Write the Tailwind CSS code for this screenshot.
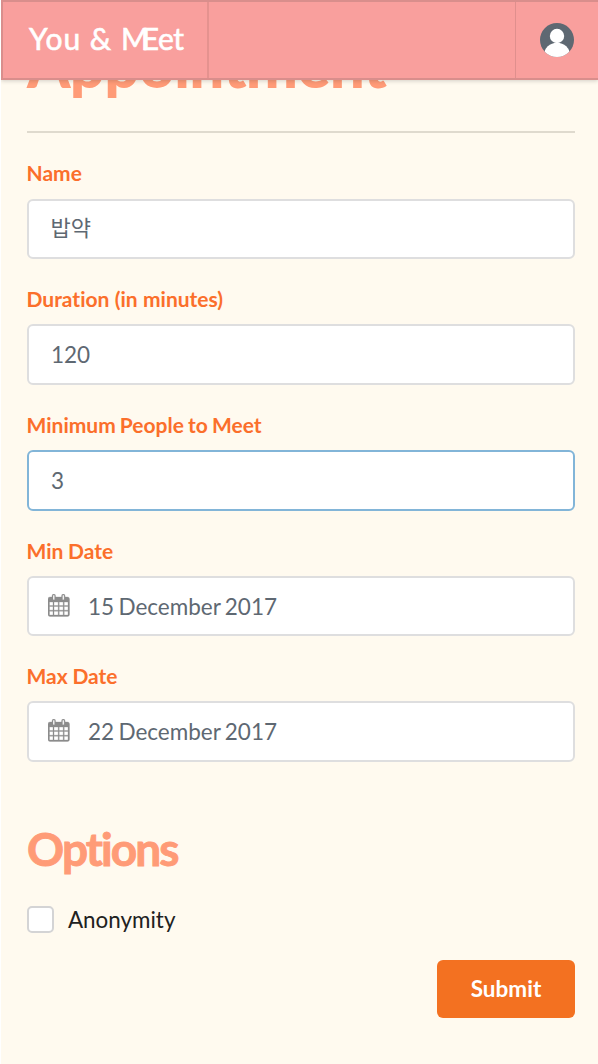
<!DOCTYPE html>
<html lang="en">
<head>
<meta charset="utf-8">
<title>You &amp; MEet</title>
<script src="https://cdn.jsdelivr.net/npm/@tailwindcss/browser@4"></script>
</head>
<body class="bg-white pl-px h-[1064px] overflow-hidden font-['Lato','Noto_Sans_CJK_KR',sans-serif] [font-variant-ligatures:none]">
<div class="bg-[#fffaef] h-[1064px] overflow-hidden">
  <header class="relative z-10 h-20 flex bg-[#f99f9d] border-2 border-r-0 border-[#d98e8c] shadow-[0_1px_4px_rgba(34,36,38,0.2)]">
    <div class="w-[206px] shrink-0 border-r-2 border-[#e5928f] pl-[26px] pt-[14px] text-white text-[30px] leading-[44px] whitespace-nowrap [-webkit-text-stroke:0.6px_white]"><span class="tracking-[1px]">You &amp; </span><span class="tracking-[-7px]">M</span><span class="tracking-[-0.4px]">Eet</span></div>
    <div class="grow"></div>
    <div class="w-[83px] shrink-0 border-l border-[#e08f8d] flex items-center justify-center">
      <svg class="w-[34px] h-[34px]" viewBox="0 0 34 34">
        <defs><clipPath id="avatar"><circle cx="17" cy="17" r="17"/></clipPath></defs>
        <g clip-path="url(#avatar)"><rect width="34" height="34" fill="#5e6872"/><circle cx="17" cy="13" r="7.2" fill="#fff"/><ellipse cx="17" cy="32" rx="13" ry="12.3" fill="#fff"/></g>
      </svg>
    </div>
  </header>
  <main class="pl-[26px] pr-[23px]">
    <h1 class="-mt-[52px] h-[105px] border-b-2 border-[#dfdace] text-[#ff9b77] font-black text-[62px] leading-[72px] tracking-[-0.8px] whitespace-nowrap">Appointment</h1>
    <form class="flex flex-col pt-[25px] [&_label]:block [&_label]:-ml-[0.5px] [&_label]:text-[21px] [&_label]:leading-[30px] [&_label]:font-bold [&_label]:text-[#fb6f2b]">
      <div class="flex flex-col gap-[25px] text-[22.5px] text-[#5e6872] [word-spacing:-1.4px]">
        <div>
          <label class="h-[41px]">Name</label>
          <div class="h-[60px] rounded-md border-2 border-[#dededf] bg-white pl-[21.5px] text-[22px] leading-[54px]">밥약</div>
        </div>
        <div>
          <label class="h-[40px] [word-spacing:0.2px]">Duration (in minutes)</label>
          <div class="h-[61px] rounded-md border-2 border-[#dededf] bg-white pl-[22px] leading-[58px]">120</div>
        </div>
        <div>
          <label class="h-[40px] [word-spacing:-1px]">Minimum People to Meet</label>
          <div class="h-[61px] rounded-md border-2 border-[#82b5d8] bg-white pl-[22px] leading-[58px]">3</div>
        </div>
        <div>
          <label class="h-[40px] [word-spacing:-0.4px]">Min Date</label>
          <div class="flex h-[60px] rounded-md border-2 border-[#dededf] bg-white pl-[18.5px] leading-[58px]">
            <svg class="mt-[16px] mr-[18.5px] w-[22px] h-[23px] shrink-0" viewBox="0 0 22 23" fill="#8c8c8c"><path stroke="#8c8c8c" stroke-width=".3" fill-rule="evenodd" d="M2 3H4V2Q4 0 5.8 0T7.6 2V3H13.5V2Q13.5 0 15.3 0T17.1 2V3H19.5Q21.5 3 21.5 5V20.5Q21.5 22.5 19.5 22.5H2Q0 22.5 0 20.5V5Q0 3 2 3ZM5 2V5.8H6.6V2Q6.6 1 5.8 1T5 2ZM14.5 2V5.8H16.1V2Q16.1 1 15.3 1T14.5 2ZM1.5 8V11.5H5V8ZM6 8V11.5H10.2V8ZM11.2 8V11.5H15.2V8ZM16.2 8V11.5H20V8ZM1.5 12.5V16.2H5V12.5ZM6 12.5V16.2H10.2V12.5ZM11.2 12.5V16.2H15.2V12.5ZM16.2 12.5V16.2H20V12.5ZM1.5 17.2V21H5V17.2ZM6 17.2V21H10.2V17.2ZM11.2 17.2V21H15.2V17.2ZM16.2 17.2V21H20V17.2Z"/></svg>
            <span>15 December 2017</span>
          </div>
        </div>
        <div>
          <label class="h-[40px] [word-spacing:-0.4px]">Max Date</label>
          <div class="flex h-[61px] rounded-md border-2 border-[#dededf] bg-white pl-[18.5px] leading-[58px]">
            <svg class="mt-[16px] mr-[18.5px] w-[22px] h-[23px] shrink-0" viewBox="0 0 22 23" fill="#8c8c8c"><path stroke="#8c8c8c" stroke-width=".3" fill-rule="evenodd" d="M2 3H4V2Q4 0 5.8 0T7.6 2V3H13.5V2Q13.5 0 15.3 0T17.1 2V3H19.5Q21.5 3 21.5 5V20.5Q21.5 22.5 19.5 22.5H2Q0 22.5 0 20.5V5Q0 3 2 3ZM5 2V5.8H6.6V2Q6.6 1 5.8 1T5 2ZM14.5 2V5.8H16.1V2Q16.1 1 15.3 1T14.5 2ZM1.5 8V11.5H5V8ZM6 8V11.5H10.2V8ZM11.2 8V11.5H15.2V8ZM16.2 8V11.5H20V8ZM1.5 12.5V16.2H5V12.5ZM6 12.5V16.2H10.2V12.5ZM11.2 12.5V16.2H15.2V12.5ZM16.2 12.5V16.2H20V12.5ZM1.5 17.2V21H5V17.2ZM6 17.2V21H10.2V17.2ZM11.2 17.2V21H15.2V17.2ZM16.2 17.2V21H20V17.2Z"/></svg>
            <span>22 December 2017</span>
          </div>
        </div>
      </div>
      <h2 class="mt-[57px] h-[87px] text-[46px] leading-[60px] font-bold tracking-[-1.9px] [-webkit-text-stroke:0.9px_#ff9b77] text-[#ff9b77]">Options</h2>
      <div class="flex h-[54px]">
        <div class="w-[27px] h-[27px] rounded-[5px] border-2 border-[#d4d4d5] bg-white"></div>
        <span class="ml-[14px] text-[22.4px] leading-[28px] text-[#212121]">Anonymity</span>
      </div>
      <div class="flex justify-end">
        <button type="button" class="w-[138px] h-[58px] rounded-md bg-[#f37121] text-white font-bold text-[22.5px]">Submit</button>
      </div>
    </form>
  </main>
</div>
</body>
</html>
